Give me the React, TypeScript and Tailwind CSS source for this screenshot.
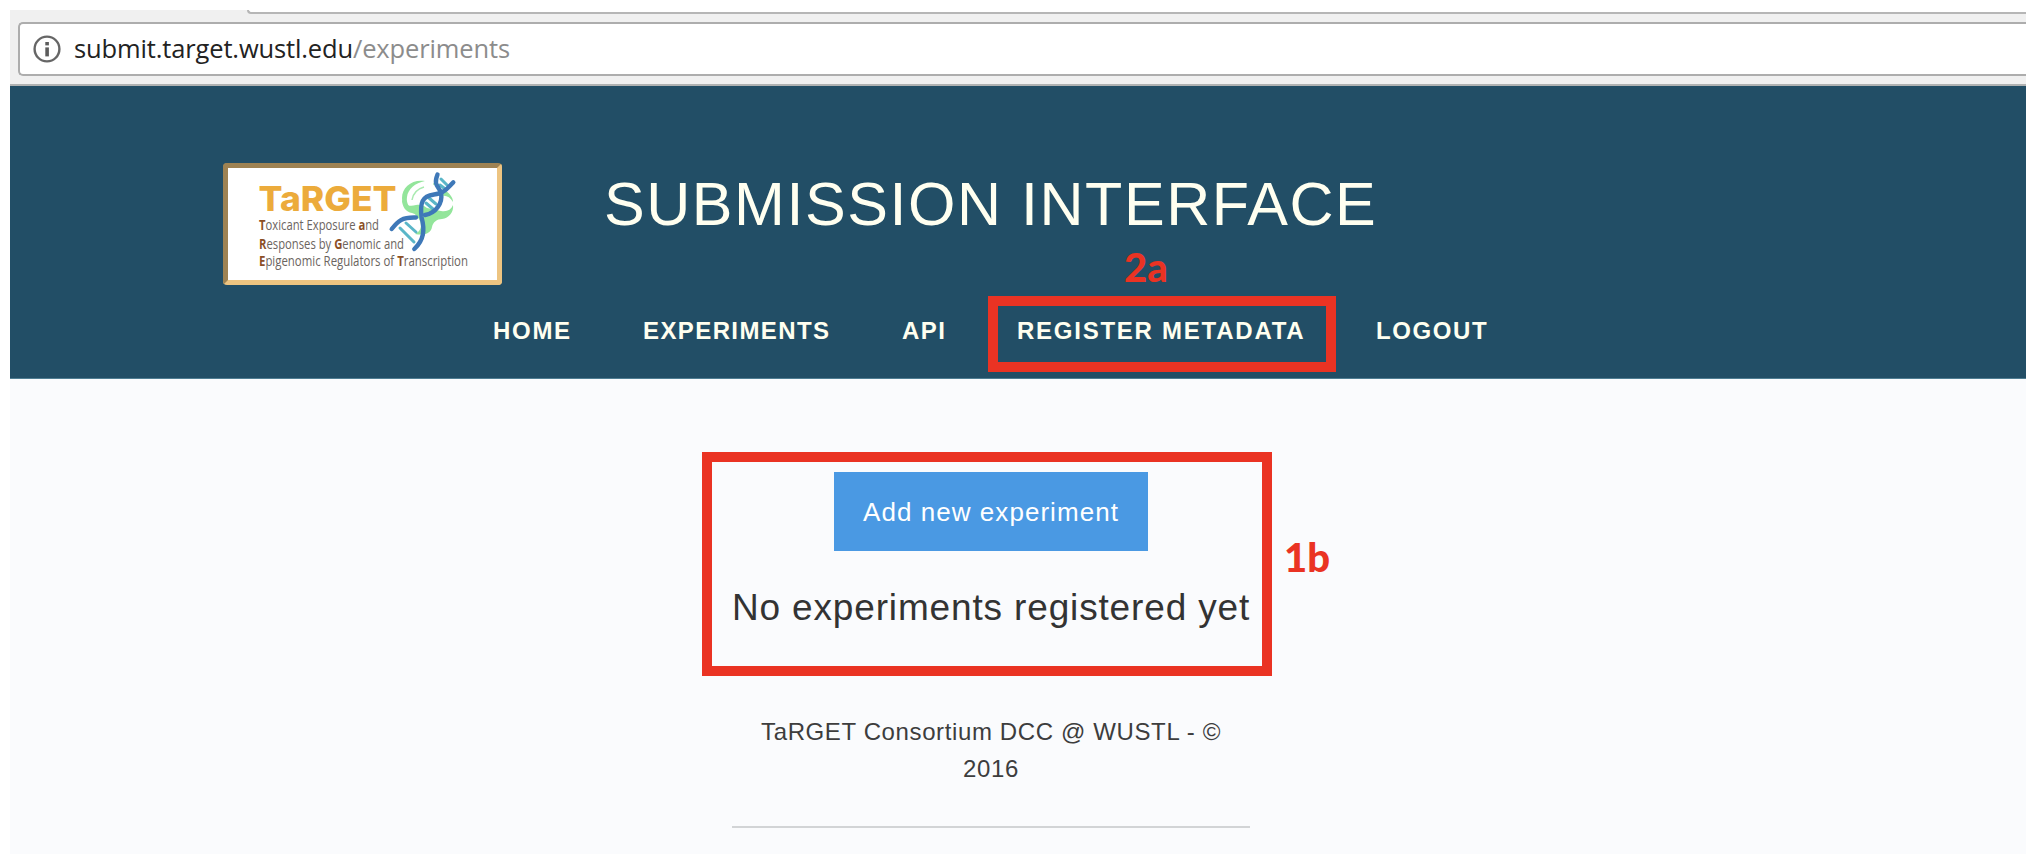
import type { ReactNode } from "react";

const sans = "font-['Liberation_Sans',Arial,sans-serif]";

function InfoIcon() {
  return (
    <svg width="28" height="28" viewBox="0 0 28 28" fill="none" className="shrink-0">
      <circle cx="14" cy="14" r="12.4" stroke="#666" strokeWidth="2.4" />
      <rect x="12.3" y="7" width="3.6" height="3.4" fill="#5c5c5c" />
      <rect x="12.3" y="12.4" width="3.6" height="9" fill="#5c5c5c" />
    </svg>
  );
}

function AddressBar() {
  return (
    <div className="flex h-[76px] flex-col bg-[#f0f0f0]">
      <div className="ml-[237px] h-[4px] shrink-0 rounded-bl-[4px] border-b-2 border-l-2 border-[#b6b6b6] bg-white" />
      <div className="mt-[8px] ml-2 flex h-[54px] shrink-0 items-center rounded-l-[5px] border-2 border-r-0 border-[#adadad] bg-white pl-[13px]">
        <InfoIcon />
        <div className="ml-[13px] font-['Open_Sans','Noto_Sans',sans-serif] text-[25.5px] leading-none tracking-[-0.14px] whitespace-nowrap text-[#222]">
          submit.target.wustl.edu<span className="text-[#8c8c8c]">/experiments</span>
        </div>
      </div>
      <div className="mt-auto h-[2px] shrink-0 bg-[#b0b2b2]" />
    </div>
  );
}

function Logo() {
  return (
    <div className="h-[122px] w-[279px] shrink-0 rounded-[4px] border-[5px] border-t-[#9e8252] border-r-[#edc481] border-b-[#edc481] border-l-[#9e8252] bg-white">
      <svg width="269" height="112" viewBox="228 168 269 112" className="block">
        <g fill="#93e59b">
          <path d="M425 181c-13-2-23 6-23 17 0 9 6 14 13 13-6-3-9-8-8-14 1-8 8-14 18-16z" />
          <path d="M402 199c2 6 7 8 14 6 4-1 8 0 11 3l14 3c6 1 10-1 12-6 1 7-4 13-11 14-5 0-9 3-10 8-1 6-7 9-17 7 6-3 7-8 5-13-2-4-4-7-8-8-6-1-10-6-10-14z" />
          <path d="M444 190c6 3 9 8 9 12-3-5-7-7-11-6z" />
        </g>
        <path d="M412 200c1-6 5-11 12-13M433 184c4 0 8 2 11 5" fill="none" stroke="#a9eab0" strokeWidth="1.5" />
        <text x="258.5" y="211" fontFamily="Inter, sans-serif" fontWeight="800" fontSize="34" fill="#ecab3b" textLength="138" lengthAdjust="spacingAndGlyphs">TaRGET</text>
        <g fontFamily="Open Sans, sans-serif" fontSize="14" fill="#6b6460">
          <text x="259" y="229.5" textLength="120" lengthAdjust="spacingAndGlyphs"><tspan fontWeight="700" fill="#8b4f26">T</tspan>oxicant Exposure <tspan fontWeight="700" fill="#8b4f26">a</tspan>nd</text>
          <text x="259" y="248.5" textLength="145" lengthAdjust="spacingAndGlyphs"><tspan fontWeight="700" fill="#8b4f26">R</tspan>esponses by <tspan fontWeight="700" fill="#8b4f26">G</tspan>enomic and</text>
          <text x="259" y="266" textLength="209" lengthAdjust="spacingAndGlyphs"><tspan fontWeight="700" fill="#8b4f26">E</tspan>pigenomic Regulators of <tspan fontWeight="700" fill="#8b4f26">T</tspan>ranscription</text>
        </g>
        <g fill="none" strokeLinecap="round" strokeLinejoin="round">
          <path d="M400 228l14 14M406 223l10 9M426 203l7 6M429 198l7 6M441 179l6 6M440 185l4 3" stroke="#5ab6c8" strokeWidth="3" />
          <path d="M391.7 229C398 221 402 217 416 217.5M425 215C436 213 443 203 441 193C439 186 433 186 437.5 174.500" stroke="#3e78b8" strokeWidth="4.4" />
          <path d="M414.3 249C424 240 425 230 421.500 217C420 203 422 196 434 194.500C443 194 448 188 453.3 182.3" stroke="#3e78b8" strokeWidth="4.4" />
        </g>
      </svg>
    </div>
  );
}

function NavItem({ className, children }: { className: string; children: ReactNode }) {
  return <a className={`shrink-0 whitespace-nowrap ${className}`}>{children}</a>;
}

function Header() {
  return (
    <header className="flex h-[293px] flex-col border-b border-[#4f7d92] bg-[#224e66] text-[#fffff0]">
      <div className="mt-[77px] ml-[213px] flex shrink-0">
        <Logo />
        <h1 className="mt-[11px] ml-[102px] text-[61px] leading-[60px] tracking-[1.55px] whitespace-nowrap">SUBMISSION INTERFACE</h1>
      </div>
      <nav className="mt-[34px] ml-[483px] flex text-[24px] leading-[24px] font-bold">
        <NavItem className="w-[150px] tracking-[1.7px]">HOME</NavItem>
        <NavItem className="w-[259px] tracking-[1.4px]">EXPERIMENTS</NavItem>
        <NavItem className="w-[115px] tracking-[1.4px]">API</NavItem>
        <NavItem className="w-[359px] tracking-[1.75px]">REGISTER METADATA</NavItem>
        <NavItem className="tracking-[1.6px]">LOGOUT</NavItem>
      </nav>
    </header>
  );
}

export default function App() {
  return (
    <div className={`relative h-[854px] w-[2028px] overflow-hidden bg-white pt-[10px] pl-[10px] ${sans}`}>
      <div className="flex h-[844px] w-[2016px] flex-col bg-[#fafbfd]">
        <AddressBar />
        <Header />
        <main className="ml-[722px] flex w-[518px] flex-col items-center">
          <button className="mt-[93px] h-[79px] w-[314px] bg-[#4a99e3] text-[26px] leading-[26px] tracking-[1.05px] whitespace-nowrap text-white">
            Add new experiment
          </button>
          <h4 className="mt-[36px] text-[37px] leading-[42px] tracking-[0.85px] whitespace-nowrap text-[#333]">No experiments registered yet</h4>
          <footer className="mt-[84px] w-full border-b-2 border-[#d2d4d6] pb-[39px] text-center text-[24px] leading-[37px] tracking-[0.62px] text-[#3d3d3d]">
            TaRGET Consortium DCC @ WUSTL - ©<br />2016
          </footer>
        </main>
      </div>
      <div className="absolute top-[296px] left-[988px] h-[76px] w-[348px] border-[10px] border-[#ea3323]" />
      <div className="absolute top-[452px] left-[702px] h-[224px] w-[570px] border-[10px] border-[#ea3323]" />
      <div className="absolute top-[247px] left-[1124px] font-['Lato',sans-serif] text-[40px] leading-[40px] font-black text-[#ea3323]">2a</div>
      <div className="absolute top-[537px] left-[1284px] font-['Lato',sans-serif] text-[40px] leading-[40px] font-black text-[#ea3323]">1b</div>
    </div>
  );
}
